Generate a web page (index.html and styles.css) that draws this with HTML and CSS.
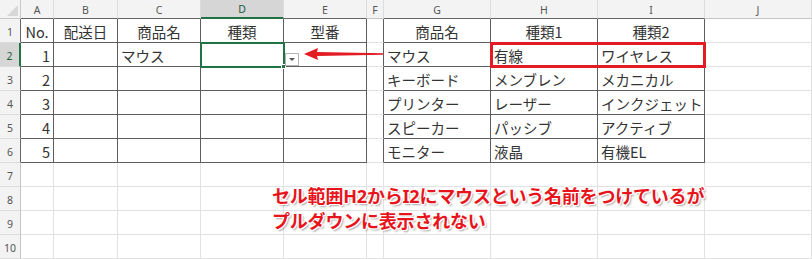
FILE: index.html
```html
<!DOCTYPE html>
<html lang="ja">
<head>
<meta charset="utf-8">
<link rel="stylesheet" href="styles.css">
</head>
<body>
<div class="sheet">
  <div class="corner"><span class="tri"></span></div>
  <div class="ch tb">A</div><div class="ch tb">B</div><div class="ch tb">C</div><div class="ch tb sel">D</div><div class="ch tb">E</div><div class="ch">F</div><div class="ch tb">G</div><div class="ch tb">H</div><div class="ch tb">I</div><div class="ch">J</div>

  <div class="rh b">1</div>
  <div class="c t ctr">No.</div><div class="c t ctr">配送日</div><div class="c t ctr">商品名</div><div class="c t ctr">種類</div><div class="c t ctr">型番</div><div class="c fb"></div><div class="c t ctr">商品名</div><div class="c t ctr">種類1</div><div class="c t ctr">種類2</div><div class="c"></div>

  <div class="rh b sel">2</div>
  <div class="c t r">1</div><div class="c t"></div><div class="c t">マウス</div><div class="c t active"><span class="handle"></span><span class="dd"><span class="ddtri"></span></span></div><div class="c t"></div><div class="c fb"></div><div class="c t">マウス</div><div class="c t">有線</div><div class="c t">ワイヤレス</div><div class="c"></div>

  <div class="rh b">3</div>
  <div class="c t r">2</div><div class="c t"></div><div class="c t"></div><div class="c t"></div><div class="c t"></div><div class="c fb"></div><div class="c t">キーボード</div><div class="c t">メンブレン</div><div class="c t">メカニカル</div><div class="c"></div>

  <div class="rh b">4</div>
  <div class="c t r">3</div><div class="c t"></div><div class="c t"></div><div class="c t"></div><div class="c t"></div><div class="c fb"></div><div class="c t">プリンター</div><div class="c t">レーザー</div><div class="c t">インクジェット</div><div class="c"></div>

  <div class="rh b">5</div>
  <div class="c t r">4</div><div class="c t"></div><div class="c t"></div><div class="c t"></div><div class="c t"></div><div class="c fb"></div><div class="c t">スピーカー</div><div class="c t">パッシブ</div><div class="c t">アクティブ</div><div class="c"></div>

  <div class="rh b">6</div>
  <div class="c t r">5</div><div class="c t"></div><div class="c t"></div><div class="c t"></div><div class="c t"></div><div class="c fb"></div><div class="c t">モニター</div><div class="c t">液晶</div><div class="c t">有機EL</div><div class="c"></div>

  <div class="rh">7</div>
  <div class="c"></div><div class="c"></div><div class="c"></div><div class="c"></div><div class="c"></div><div class="c"></div><div class="c"></div><div class="c"></div><div class="c"></div><div class="c"></div>

  <div class="rh">8</div>
  <div class="c"></div><div class="c"></div><div class="c"></div><div class="c"></div><div class="c"></div><div class="c"></div><div class="c"></div><div class="c"></div><div class="c"></div><div class="c"></div>

  <div class="rh">9</div>
  <div class="c"></div><div class="c"></div><div class="c"></div><div class="c"></div><div class="c"></div><div class="c"></div><div class="c"></div><div class="c"></div><div class="c"></div><div class="c"></div>

  <div class="rh">10</div>
  <div class="c"></div><div class="c"></div><div class="c"></div><div class="c"></div><div class="c"></div><div class="c"></div><div class="c"></div><div class="c"></div><div class="c"></div><div class="c"></div>

  <div class="redbox"></div>
  <svg class="arrow" width="100" height="24" viewBox="0 0 100 24">
    <polygon points="20,12 34,6 33,10 99,11.2 99,12.8 33,14 34,18" fill="#e31b23"/>
  </svg>
  <div class="note">セル範囲<b>H2</b>から<b>I2</b>にマウスという名前をつけているが<br>プルダウンに表示されない</div>
</div>
</body>
</html>
```

FILE: styles.css
```css
* { box-sizing: border-box; }
html, body { margin: 0; padding: 0; background: #fff; }
body { width: 812px; height: 259px; overflow: hidden; }

.sheet {
  position: relative;
  display: grid;
  grid-template-columns: 21px 33px 64px 83px 83px 83px 17px 107px 107px 107px 107px;
  grid-template-rows: 19px repeat(10, 24px);
  font-family: "Noto Sans CJK JP", "Noto Sans", sans-serif;
}

.corner {
  position: relative;
  background: #f3f3f3;
  border-right: 1px solid #c8c8c8;
  border-bottom: 1px solid #c8c8c8;
}
.tri {
  position: absolute;
  right: 2px;
  bottom: 2px;
  width: 0;
  height: 0;
  border-left: 11px solid transparent;
  border-bottom: 11px solid #d7d7d7;
}

.ch {
  background: #f3f3f3;
  border-right: 1px solid #dcdcdc;
  border-bottom: 1px solid #c4c4c4;
  font-family: "Noto Sans", "Liberation Sans", sans-serif;
  font-size: 10.5px;
  color: #555;
  display: flex;
  align-items: center;
  justify-content: center;
  padding-top: 1px;
}
.ch.tb { border-bottom-color: #666; }
.ch.sel {
  background: #d6d6d6;
  border-bottom: 2px solid #217346;
  color: #1e5c39;
}

.rh {
  background: #f3f3f3;
  border-right: 1px solid #c4c4c4;
  border-bottom: 1px solid #dcdcdc;
  font-family: "Noto Sans", "Liberation Sans", sans-serif;
  font-size: 10.5px;
  color: #555;
  display: flex;
  align-items: center;
  justify-content: center;
  padding-top: 3px;
}
.rh.b { border-right-color: #666; }
.rh.sel {
  background: #d6d6d6;
  border-right: 2px solid #217346;
  color: #1e5c39;
}

.c {
  position: relative;
  border-right: 1px solid #e2e2e2;
  border-bottom: 1px solid #e2e2e2;
  font-size: 14.5px;
  color: #333;
  display: flex;
  align-items: center;
  padding: 1px 3px 0 3px;
  white-space: nowrap;
}
.c.t { border-right-color: #5e5e5e; border-bottom-color: #5e5e5e; }
.c.fb { border-right-color: #5e5e5e; }
.c.ctr { justify-content: center; }
.c.r { justify-content: flex-end; }

.active {
  outline: 2px solid #217346;
  outline-offset: -1px;
  z-index: 2;
}
.handle {
  position: absolute;
  right: -3px;
  bottom: -3px;
  width: 5px;
  height: 5px;
  background: #217346;
  border: 1px solid #fff;
}
.dd {
  position: absolute;
  left: 84px;
  top: 10px;
  width: 14px;
  height: 13px;
  background: #fff;
  border: 1px solid #b4b4b4;
  display: flex;
  align-items: center;
  justify-content: center;
}
.ddtri {
  width: 0;
  height: 0;
  border-left: 3px solid transparent;
  border-right: 3px solid transparent;
  border-top: 3px solid #555;
}

.redbox {
  position: absolute;
  grid-column: 9 / 11;
  grid-row: 3 / 4;
  top: -1px;
  left: -1px;
  right: -1px;
  bottom: -1px;
  border: 3px solid #e31b23;
  z-index: 3;
}

.arrow {
  position: absolute;
  grid-column: 6 / 8;
  grid-row: 3 / 4;
  top: -1px;
  left: 0;
  z-index: 3;
}

.note {
  position: absolute;
  grid-column: 5 / 12;
  grid-row: 9 / 11;
  top: -4px;
  left: 71px;
  font-size: 18px;
  line-height: 24px;
  font-weight: 700;
  color: #e8141c;
  white-space: nowrap;
  letter-spacing: -0.2px;
  text-shadow:
    1px 0 0 #fff, -1px 0 0 #fff, 0 1px 0 #fff, 0 -1px 0 #fff,
    1px 1px 0 #fff, -1px -1px 0 #fff, 1px -1px 0 #fff, -1px 1px 0 #fff,
    2px 2px 2px rgba(0,0,0,0.35);
  z-index: 3;
}
.note b { font-family: "Noto Sans", "Liberation Sans", sans-serif; font-weight: 700; }
```
